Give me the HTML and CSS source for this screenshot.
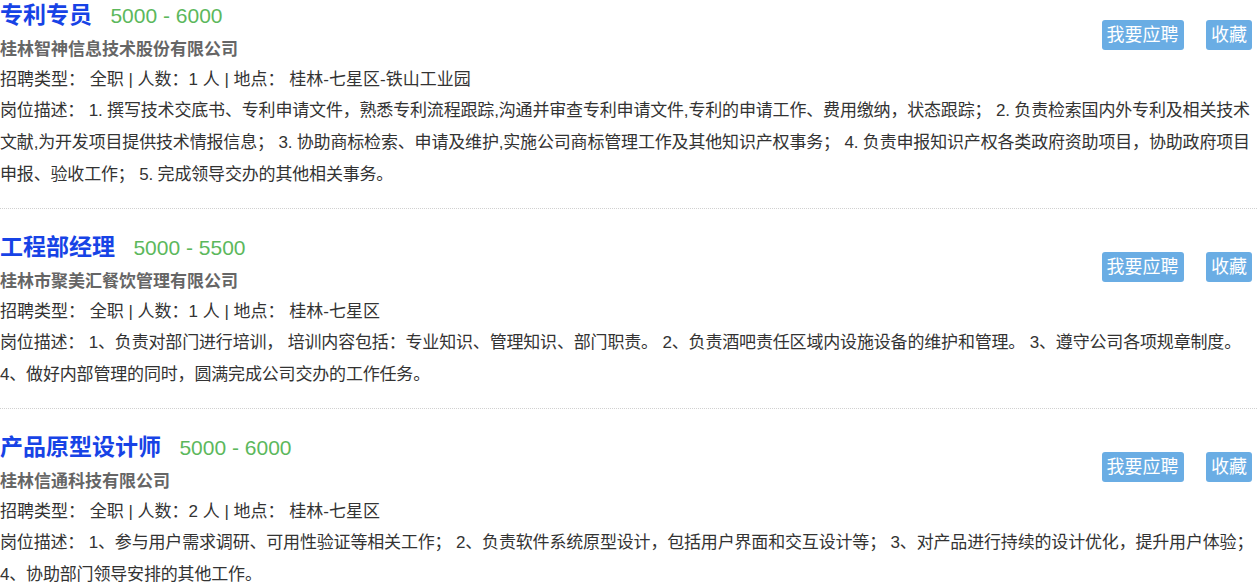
FILE: index.html
```html
<!DOCTYPE html>
<html lang="zh-CN">
<head>
  <meta charset="UTF-8">
  <title>招聘信息</title>
  <link rel="stylesheet" href="styles.css">
</head>
<body>

  <div class="job-list">

    <div class="job">
      <div class="actions">
        <button class="btn">我要应聘</button>
        <button class="btn">收藏</button>
      </div>
      <h3 class="job-title">专利专员 <span class="salary">5000 - 6000</span></h3>
      <div class="company">桂林智神信息技术股份有限公司</div>
      <div class="info">招聘类型： 全职 | 人数：1 人 | 地点： 桂林-七星区-铁山工业园</div>
      <div class="desc">岗位描述： 1. 撰写技术交底书、专利申请文件，熟悉专利流程跟踪,沟通并审查专利申请文件,专利的申请工作、费用缴纳，状态跟踪； 2. 负责检索国内外专利及相关技术文献,为开发项目提供技术情报信息； 3. 协助商标检索、申请及维护,实施公司商标管理工作及其他知识产权事务； 4. 负责申报知识产权各类政府资助项目，协助政府项目申报、验收工作； 5. 完成领导交办的其他相关事务。</div>
    </div>

    <div class="job">
      <div class="actions">
        <button class="btn">我要应聘</button>
        <button class="btn">收藏</button>
      </div>
      <h3 class="job-title">工程部经理 <span class="salary">5000 - 5500</span></h3>
      <div class="company">桂林市聚美汇餐饮管理有限公司</div>
      <div class="info">招聘类型： 全职 | 人数：1 人 | 地点： 桂林-七星区</div>
      <div class="desc">岗位描述： 1、负责对部门进行培训， 培训内容包括：专业知识、管理知识、部门职责。 2、负责酒吧责任区域内设施设备的维护和管理。 3、遵守公司各项规章制度。 4、做好内部管理的同时，圆满完成公司交办的工作任务。</div>
    </div>

    <div class="job">
      <div class="actions">
        <button class="btn">我要应聘</button>
        <button class="btn">收藏</button>
      </div>
      <h3 class="job-title">产品原型设计师 <span class="salary">5000 - 6000</span></h3>
      <div class="company">桂林信通科技有限公司</div>
      <div class="info">招聘类型： 全职 | 人数：2 人 | 地点： 桂林-七星区</div>
      <div class="desc">岗位描述： 1、参与用户需求调研、可用性验证等相关工作； 2、负责软件系统原型设计，包括用户界面和交互设计等； 3、对产品进行持续的设计优化，提升用户体验； 4、协助部门领导安排的其他工作。</div>
    </div>

  </div>

</body>
</html>
```

FILE: styles.css
```css
body {
  margin: 0;
  font-family: "Liberation Sans", "Noto Sans CJK SC", sans-serif;
  color: #333;
  background: #fff;
}
.job-list {
  margin-top: -23px;
}
.job {
  padding: 23px 0 17px 0;
  border-bottom: 1px dotted #d0d0d0;
}
.actions {
  float: right;
  margin: 20px 5px 0 0;
}
.btn {
  margin-left: 18px;
  height: 30px;
  padding: 0 5px;
  background: #6aade4;
  color: #fff;
  border: none;
  border-radius: 3px;
  font-family: inherit;
  font-size: 18px;
  line-height: 30px;
  cursor: pointer;
}
.job-title {
  margin: 0 0 4px 0;
  font-size: 23px;
  line-height: 30px;
  font-weight: bold;
  color: #1743e6;
}
.salary {
  margin-left: 12px;
  font-size: 21px;
  line-height: 1;
  font-weight: normal;
  color: #5cb85c;
}
.company {
  font-size: 17px;
  line-height: 31px;
  font-weight: bold;
  color: #666;
}
.info {
  font-size: 17px;
  line-height: 30px;
}
.desc {
  font-size: 17px;
  line-height: 32px;
  letter-spacing: -0.17px;
}
```
